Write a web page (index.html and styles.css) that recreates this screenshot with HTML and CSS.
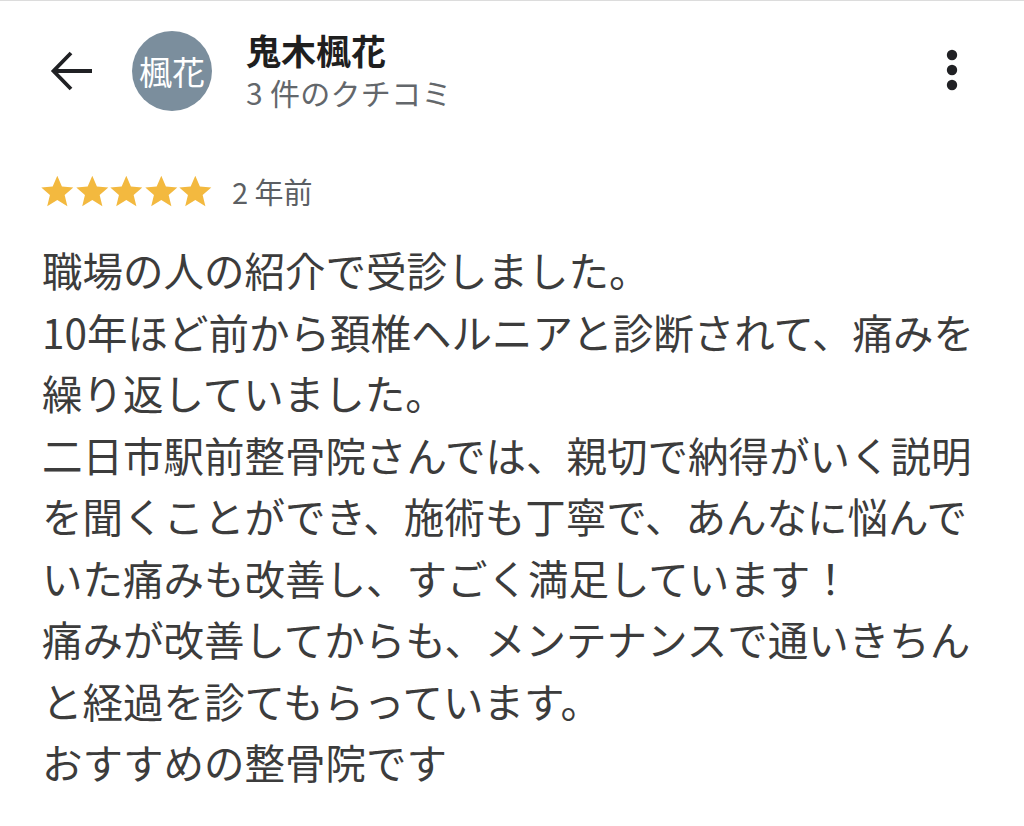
FILE: index.html
```html
<!DOCTYPE html>
<html lang="ja">
<head>
<meta charset="utf-8">
<title>クチコミ</title>
<link rel="stylesheet" href="styles.css">
</head>
<body>
<div class="page">
  <header class="header">
    <svg class="back" width="44" height="44" viewBox="0 0 44 44" aria-hidden="true">
      <path d="M42 22H4M21 4L3.5 22L21 40" fill="none" stroke="#202124" stroke-width="3.8" stroke-linejoin="miter"/>
    </svg>
    <div class="avatar">楓花</div>
    <div class="info">
      <div class="name">鬼木楓花</div>
      <div class="count">3 件のクチコミ</div>
    </div>
    <svg class="more" width="14" height="44" viewBox="0 0 14 44" aria-hidden="true">
      <circle cx="7" cy="7" r="5.2" fill="#202124"/>
      <circle cx="7" cy="22" r="5.2" fill="#202124"/>
      <circle cx="7" cy="37" r="5.2" fill="#202124"/>
    </svg>
  </header>
  <div class="meta">
    <div class="stars">
      <svg class="star" viewBox="0 0 24 24"><path d="M12 1.3l3.2 7.3 7.9.7-6 5.2 1.9 7.8L12 18.1l-7 4.2 1.9-7.8-6-5.2 7.9-.7z"/></svg>
      <svg class="star" viewBox="0 0 24 24"><path d="M12 1.3l3.2 7.3 7.9.7-6 5.2 1.9 7.8L12 18.1l-7 4.2 1.9-7.8-6-5.2 7.9-.7z"/></svg>
      <svg class="star" viewBox="0 0 24 24"><path d="M12 1.3l3.2 7.3 7.9.7-6 5.2 1.9 7.8L12 18.1l-7 4.2 1.9-7.8-6-5.2 7.9-.7z"/></svg>
      <svg class="star" viewBox="0 0 24 24"><path d="M12 1.3l3.2 7.3 7.9.7-6 5.2 1.9 7.8L12 18.1l-7 4.2 1.9-7.8-6-5.2 7.9-.7z"/></svg>
      <svg class="star" viewBox="0 0 24 24"><path d="M12 1.3l3.2 7.3 7.9.7-6 5.2 1.9 7.8L12 18.1l-7 4.2 1.9-7.8-6-5.2 7.9-.7z"/></svg>
    </div>
    <span class="ago">2 年前</span>
  </div>
  <p class="review">職場の人の紹介で受診しました。<br>10年ほど前から頚椎ヘルニアと診断されて、痛みを<br>繰り返していました。<br>二日市駅前整骨院さんでは、親切で納得がいく説明<br>を聞くことができ、施術も丁寧で、あんなに悩んで<br>いた痛みも改善し、すごく満足しています！<br>痛みが改善してからも、メンテナンスで通いきちん<br>と経過を診てもらっています。<br>おすすめの整骨院です</p>
</div>
</body>
</html>
```

FILE: styles.css
```css
html, body {
  margin: 0;
  padding: 0;
  background: #ffffff;
}

body {
  font-family: "Noto Sans CJK JP", "Noto Sans", sans-serif;
  color: #3c3c3c;
}

.page {
  width: 1024px;
  height: 826px;
  border-top: 1px solid #dcdcdc;
  box-sizing: border-box;
  overflow: hidden;
}

.header {
  display: flex;
  align-items: center;
  padding-top: 30px;
  height: 80px;
}

.back {
  margin-left: 50px;
  flex: none;
}

.avatar {
  width: 80px;
  height: 80px;
  margin-left: 38px;
  border-radius: 50%;
  background: #7b8e9d;
  color: #ffffff;
  font-size: 33px;
  line-height: 80px;
  text-align: center;
  flex: none;
}

.info {
  margin-left: 34px;
  display: flex;
  flex-direction: column;
}

.name {
  font-size: 35px;
  font-weight: 700;
  color: #1f1f1f;
  line-height: 38px;
}

.count {
  font-size: 30px;
  color: #63676b;
  line-height: 38px;
  margin-top: 4px;
  letter-spacing: 0.3px;
}

.more {
  margin-left: auto;
  margin-right: 65px;
  margin-top: -2px;
  flex: none;
}

.meta {
  display: flex;
  align-items: center;
  margin-top: 63px;
  padding-left: 40px;
  height: 34px;
}

.stars {
  display: flex;
}

.star {
  width: 34.6px;
  height: 34.6px;
  fill: #f3b93f;
}

.ago {
  margin-left: 19px;
  font-size: 29px;
  color: #5c5f63;
  line-height: 34px;
}

.review {
  margin: 31px 0 0 0;
  padding-left: 42px;
  font-size: 40.5px;
  line-height: 61.5px;
  white-space: nowrap;
  color: #3c3c3c;
}
```
